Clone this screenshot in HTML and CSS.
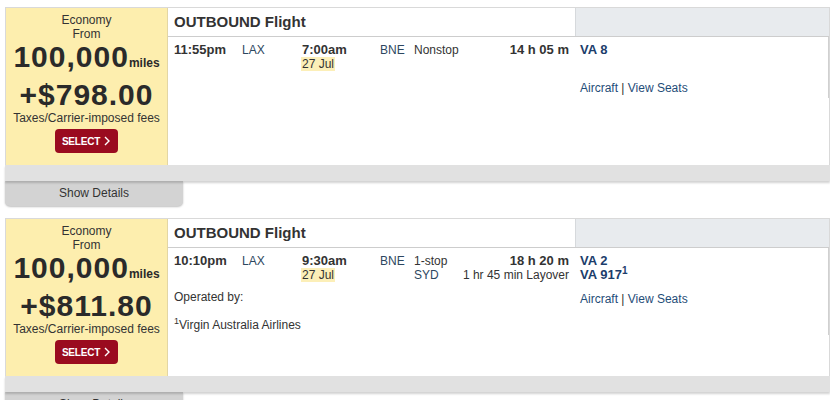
FILE: index.html
```html
<!DOCTYPE html>
<html lang="en">
<head>
	<meta charset="utf-8">
	<title>Flight results</title>
	<link rel="stylesheet" href="styles.css">
</head>
<body>
	<div class="result">
		<div class="resultMain">
			<div class="fare">
				<p class="fareCabin">Economy<br>From</p>
				<p class="fareMiles">100,000<span>miles</span></p>
				<p class="fareCash">+$798.00</p>
				<p class="fareNote">Taxes/Carrier-imposed fees</p>
				<a class="selectBtn" href="#">SELECT <svg width="6" height="10" viewBox="0 0 6 10"><path d="M1 1l4 4-4 4" fill="none" stroke="#fff" stroke-width="1.4"/></svg></a>
			</div>
			<div class="flight">
				<div class="flightHd">
					<div class="flightTitle">OUTBOUND Flight</div>
					<div class="flightHdSide"></div>
				</div>
				<div class="flightBd">
					<div class="legs">
						<div class="seg">
							<div class="time">11:55pm</div>
							<div class="port">LAX</div>
							<div><span class="time">7:00am</span><br><span class="date">27 Jul</span></div>
							<div class="port">BNE</div>
							<div>Nonstop</div>
							<div class="dur"><span class="time">14 h 05 m</span></div>
						</div>
					</div>
					<div class="side">
						<div class="flightNo">VA 8</div>
						<p class="links"><a href="#">Aircraft</a> | <a href="#">View Seats</a></p>
					</div>
				</div>
			</div>
		</div>
		<div class="resultBar"></div>
		<div class="showDetails">Show Details</div>
	</div>

	<div class="result">
		<div class="resultMain">
			<div class="fare">
				<p class="fareCabin">Economy<br>From</p>
				<p class="fareMiles">100,000<span>miles</span></p>
				<p class="fareCash">+$811.80</p>
				<p class="fareNote">Taxes/Carrier-imposed fees</p>
				<a class="selectBtn" href="#">SELECT <svg width="6" height="10" viewBox="0 0 6 10"><path d="M1 1l4 4-4 4" fill="none" stroke="#fff" stroke-width="1.4"/></svg></a>
			</div>
			<div class="flight">
				<div class="flightHd">
					<div class="flightTitle">OUTBOUND Flight</div>
					<div class="flightHdSide"></div>
				</div>
				<div class="flightBd">
					<div class="legs">
						<div class="seg">
							<div class="time">10:10pm</div>
							<div class="port">LAX</div>
							<div><span class="time">9:30am</span><br><span class="date">27 Jul</span></div>
							<div class="port">BNE</div>
							<div>1-stop<br><span class="port">SYD</span></div>
							<div class="dur"><span class="time">18 h 20 m</span><br>1 hr 45 min Layover</div>
						</div>
						<p class="operated">Operated by:</p>
						<p class="carrier"><sup>1</sup>Virgin Australia Airlines</p>
					</div>
					<div class="side">
						<div class="flightNo">VA 2<br>VA 917<sup>1</sup></div>
						<p class="links"><a href="#">Aircraft</a> | <a href="#">View Seats</a></p>
					</div>
				</div>
			</div>
		</div>
		<div class="resultBar"></div>
		<div class="showDetails">Show Details</div>
	</div>
</body>
</html>
```

FILE: styles.css
```css
body{margin: 0;background: #fff;font-family: "Liberation Sans", Arial, sans-serif;font-size: 12px;color: #333;}
p{margin: 0;}
a{color: #1f4d78;text-decoration: none;}

.result{width: 825px;margin: 7px 0 12px 5px;}
.resultMain{display: flex;height: 157px;border: 1px solid #d9d9d9;border-bottom: 0;}
.resultBar{height: 16px;background: #e1e1e1;box-shadow: 0 2px 2px rgba(0,0,0,0.18);position: relative;}
.showDetails{width: 178px;height: 25px;line-height: 25px;text-align: center;background: #d3d3d3;border-radius: 0 0 5px 5px;box-shadow: 0 1px 2px rgba(0,0,0,0.25);}

.fare{width: 162px;flex: none;background: #fdeeae;border-right: 1px solid #e3d6a4;text-align: center;padding-top: 5px;box-sizing: border-box;}
.fareCabin{line-height: 14px;}
.fareMiles{font-size: 30px;font-weight: bold;letter-spacing: 1px;line-height: 32px;color: #2a2a2a;}
.fareMiles span{font-size: 12px;letter-spacing: 0;}
.fareCash{font-size: 30px;font-weight: bold;letter-spacing: 1px;line-height: 32px;color: #2a2a2a;}
.fareNote{line-height: 14px;}
.selectBtn{display: inline-flex;align-items: center;gap: 4px;margin-top: 4px;height: 24px;padding: 0 8px 0 7px;background: #9a0b1f;border-radius: 4px;color: #fff;font-size: 10px;font-weight: bold;letter-spacing: -0.2px;}

.flight{flex: 1;display: flex;flex-direction: column;}
.flightHd{display: flex;height: 28px;border-bottom: 1px solid #cdcdcd;}
.flightTitle{width: 401px;padding-left: 6px;line-height: 28px;font-size: 15px;font-weight: bold;}
.flightHdSide{flex: 1;background: #e8ebee;border-left: 1px solid #d6d9dc;}
.flightBd{display: flex;align-items: flex-start;border-right: 1px solid #d0d0d0;padding-bottom: 3px;}

.legs{width: 395px;padding: 6px 6px 0 6px;line-height: 14px;}
.seg{display: grid;grid-template-columns: 68px 60px 78px 34px 46px 1fr;}
.time{font-size: 13px;font-weight: bold;}
.port{color: #2d4760;}
.date{background: #fcefb8;padding: 0 1px;margin-left: -1px;}
.dur{text-align: right;white-space: nowrap;}
.operated{margin-top: 8px;}
.carrier{margin-top: 14px;}
.carrier sup{font-size: 9px;line-height: 0;}

.side{flex: 1;padding: 6px 0 0 5px;line-height: 14px;}
.flightNo{min-height: 28px;font-size: 13px;font-weight: bold;color: #1c3d6b;}
.flightNo sup{font-size: 10px;line-height: 0;}
.links{margin-top: 10px;}
```
